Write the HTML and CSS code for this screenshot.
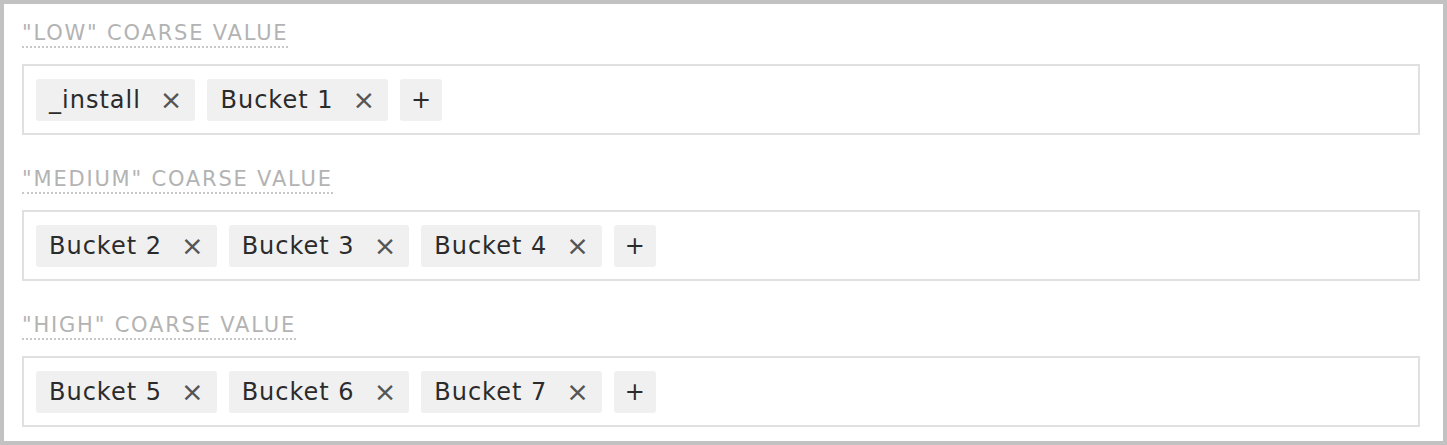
FILE: index.html
```html
<!DOCTYPE html>
<html>
<head>
<meta charset="utf-8">
<link rel="stylesheet" href="styles.css">
</head>
<body>
<div class="frame">
  <section class="group">
    <div class="label-row"><span class="label">"Low" coarse value</span></div>
    <div class="tagbox">
      <span class="chip"><span class="chip-text">_install</span><span class="chip-x">×</span></span>
      <span class="chip"><span class="chip-text">Bucket 1</span><span class="chip-x">×</span></span>
      <span class="chip chip-add">+</span>
    </div>
  </section>
  <section class="group">
    <div class="label-row"><span class="label">"Medium" coarse value</span></div>
    <div class="tagbox">
      <span class="chip"><span class="chip-text">Bucket 2</span><span class="chip-x">×</span></span>
      <span class="chip"><span class="chip-text">Bucket 3</span><span class="chip-x">×</span></span>
      <span class="chip"><span class="chip-text">Bucket 4</span><span class="chip-x">×</span></span>
      <span class="chip chip-add">+</span>
    </div>
  </section>
  <section class="group">
    <div class="label-row"><span class="label">"High" coarse value</span></div>
    <div class="tagbox">
      <span class="chip"><span class="chip-text">Bucket 5</span><span class="chip-x">×</span></span>
      <span class="chip"><span class="chip-text">Bucket 6</span><span class="chip-x">×</span></span>
      <span class="chip"><span class="chip-text">Bucket 7</span><span class="chip-x">×</span></span>
      <span class="chip chip-add">+</span>
    </div>
  </section>
</div>
</body>
</html>
```

FILE: styles.css
```css
* { box-sizing: border-box; }
html, body { margin: 0; padding: 0; background: #fff; }
body { font-family: "DejaVu Sans", "Open Sans", sans-serif; }

.frame {
  width: 1447px;
  height: 445px;
  border: 4px solid #c2c2c2;
  padding: 0 23px 0 18px;
  background: #fff;
  display: flex;
  flex-direction: column;
  gap: 15px;
}

.label-row {
  height: 60px;
  padding-top: 16px;
}

.label {
  font-size: 21px;
  line-height: 26px;
  color: #b3b3b3;
  text-transform: uppercase;
  letter-spacing: 1.8px;
  border-bottom: 2px dotted #c8c8c8;
  display: inline-block;
}

.tagbox {
  height: 71px;
  border: 2px solid #e0e0e0;
  padding: 0 12px;
  display: flex;
  align-items: center;
  gap: 12px;
}

.chip {
  height: 42px;
  background: #f0f0f0;
  border-radius: 3px;
  display: flex;
  align-items: center;
  padding: 0 13px;
  color: #2b2b2b;
  font-size: 24px;
  letter-spacing: 1px;
}

.chip-x {
  margin-left: 19px;
  color: #555;
  font-size: 27px;
  letter-spacing: 0;
}

.chip-add {
  width: 42px;
  padding: 0;
  justify-content: center;
  font-size: 24px;
  letter-spacing: 0;
}
```
